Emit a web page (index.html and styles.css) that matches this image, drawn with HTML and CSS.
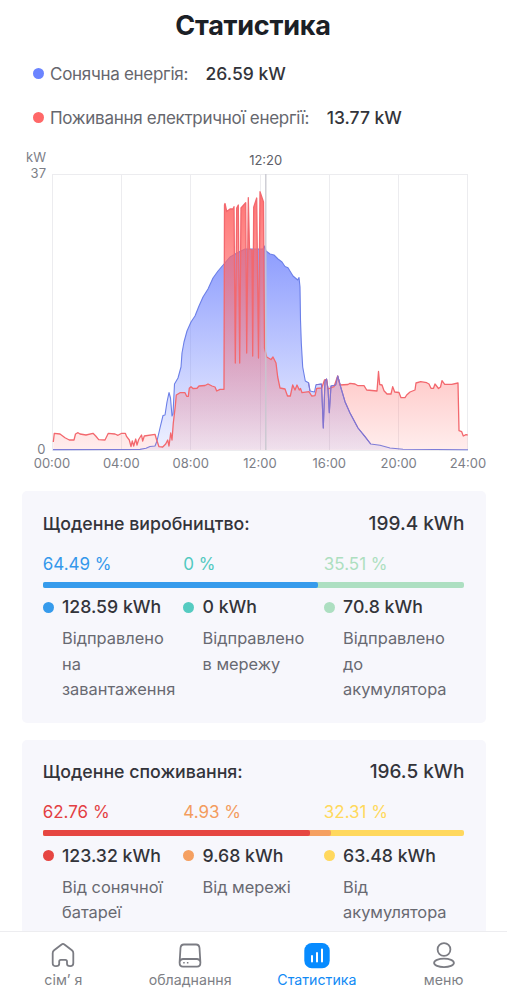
FILE: index.html
```html
<!DOCTYPE html>
<html lang="uk">
<head>
<meta charset="utf-8">
<title>Статистика</title>
<link rel="stylesheet" href="styles.css">
</head>
<body>
<main class="content">
  <h1 class="title">Статистика</h1>
  <div class="legend">
    <div class="legend-row"><i class="dot indigo"></i><span class="legend-name solar">Сонячна енергія:</span><b class="legend-value">26.59 kW</b></div>
    <div class="legend-row"><i class="dot coral"></i><span class="legend-name load">Поживання електричної енергії:</span><b class="legend-value">13.77 kW</b></div>
  </div>
  <svg class="chart" viewBox="0 145 507 330" width="507" height="330">
    <defs>
      <linearGradient id="blue" gradientUnits="userSpaceOnUse" x1="0" y1="246" x2="0" y2="450"><stop offset="0" stop-color="#6f82fd" stop-opacity=".8"/><stop offset="1" stop-color="#7388fe" stop-opacity=".12"/></linearGradient>
      <linearGradient id="red" gradientUnits="userSpaceOnUse" x1="0" y1="192" x2="0" y2="450"><stop offset="0" stop-color="#ff6666" stop-opacity=".92"/><stop offset="1" stop-color="#ff6b68" stop-opacity=".12"/></linearGradient>
    </defs>
    <path class="grid" d="M52 174.5H468M52 450.5H468M52.5 174V450M121.5 174V450M190.5 174V450M260.5 174V450M329.5 174V450M398.5 174V450M467.5 174V450"/>
    <path id="solar" fill="url(#blue)" stroke="#6b7fe8" stroke-width="1.1" stroke-linejoin="round" d="M53 449.6L140 449.4L146 448.3L150 446.5L155 446L157 441L160 428L163 415.5L165 415L167 402L169 392.5L170.5 398L172 416L173 414L174.5 384L178 378L181 367L182 353L184 342L187 331L191 322L195 316L199 306L203 297L208 289L213 278L218 271L224 264L230 257L237 253L245 249L263 249L264.5 246L266 251L270 254L274 255L278 259L282 262L285 266.5L288 267.7L293 276L297.7 280L299 277.5L300 287L300.5 320L301.3 343L302.7 367L305.3 381L308.5 382.7L310 391L314.5 392L316 384.7L321.5 384L323.3 428L325 381L326.5 379L328 389L329.3 412.7L331 386L335.7 385L337.7 376L340.7 387L345 401.7L350 413L358 428L365 436.7L370.7 444L380 445.3L390 448L403 449.3L468 449.7"/>
    <path fill="url(#red)" d="M53.3 450L53.3 442L54.3 433.3L60 434L65 437.7L69.3 440L74 440L75.5 434L78 432.7L80 434L86 435L93 433.3L95.7 436L98.7 439.7L105 440L108.3 433.3L115 434L118 435.3L121.7 433.3L125.3 433.3L126.7 436.7L129.3 440L131 446.5L132.3 441L133.7 446L135.7 439L137 445L138.7 439.5L141.5 435L142.7 441L144.3 436L155 434.3L156.7 440L159 446.7L162.7 447L165.7 444L167.7 440L169 446L170.7 433L172 440L173.3 423L175.3 406L176.3 395L180 392.7L185 392.7L186.7 396.3L188.3 396.3L189.3 388.3L191 386.7L193 388.5L197 388.3L199 386L205 385.5L208 384L212 386L215 387L216.7 391L220 389.3L224 389.3L224.5 205L225 203.5L226.7 211.5L230 209L233 209L234 206.7L235.3 363L236.7 208L238.3 205L239.7 363L241 208L245.7 202.7L246.7 353L248.3 197.7L249.5 249L252 250L252.7 356L253.7 207.3L256.7 198L258.5 358L260 191.7L263.5 202L264.5 348L266.7 357L271 359.5L273 357L276 363L277.7 377L280 388L285 389L287.5 396L290.3 396L292.7 385L295 390L297 385L299.3 390L300.5 388.5L302 392.7L309 391.7L311.7 396L315 395.7L316.7 388.3L321.7 388L324.5 380L326.7 379.5L328 389L334 386.7L337.7 376L340 385L348 384.5L350 383.3L355 384L358 385.7L364 385.7L366.7 390L377 391L378.5 371.5L379.7 384.5L382 385L384 390.7L387 394L391 394L392.7 386.7L394.7 392L399 392.5L401 397.7L405 397.7L406.7 395L410 392L415 390L416 383L420.7 381.7L426.7 382.7L429 384L431 388.3L433.5 388.3L435 384L438.5 388.5L440.5 387L442 380.7L444.7 384.3L451.7 384.3L458 383L459 430.7L461.7 431.7L463.3 436L466 434.7L467.7 435L467.7 450Z"/>
    <path class="red-line" d="M53.3 442L54.3 433.3L60 434L65 437.7L69.3 440L74 440L75.5 434L78 432.7L80 434L86 435L93 433.3L95.7 436L98.7 439.7L105 440L108.3 433.3L115 434L118 435.3L121.7 433.3L125.3 433.3L126.7 436.7L129.3 440L131 446.5L132.3 441L133.7 446L135.7 439L137 445L138.7 439.5L141.5 435L142.7 441L144.3 436L155 434.3L156.7 440L159 446.7L162.7 447L165.7 444L167.7 440L169 446L170.7 433L172 440L173.3 423L175.3 406L176.3 395L180 392.7L185 392.7L186.7 396.3L188.3 396.3L189.3 388.3L191 386.7L193 388.5L197 388.3L199 386L205 385.5L208 384L212 386L215 387L216.7 391L220 389.3L224 389.3L224.5 205L225 203.5L226.7 211.5L230 209L233 209L234 206.7L235.3 363L236.7 208L238.3 205L239.7 363L241 208L245.7 202.7L246.7 353L248.3 197.7L249.5 249L252 250L252.7 356L253.7 207.3L256.7 198L258.5 358L260 191.7L263.5 202L264.5 348L266.7 357L271 359.5L273 357L276 363L277.7 377L280 388L285 389L287.5 396L290.3 396L292.7 385L295 390L297 385L299.3 390L300.5 388.5L302 392.7L309 391.7L311.7 396L315 395.7L316.7 388.3L321.7 388L324.5 380L326.7 379.5L328 389L334 386.7L337.7 376L340 385L348 384.5L350 383.3L355 384L358 385.7L364 385.7L366.7 390L377 391L378.5 371.5L379.7 384.5L382 385L384 390.7L387 394L391 394L392.7 386.7L394.7 392L399 392.5L401 397.7L405 397.7L406.7 395L410 392L415 390L416 383L420.7 381.7L426.7 382.7L429 384L431 388.3L433.5 388.3L435 384L438.5 388.5L440.5 387L442 380.7L444.7 384.3L451.7 384.3L458 383L459 430.7L461.7 431.7L463.3 436L466 434.7L467.7 435"/>
    <path class="blue-line" d="M308.5 382.7L310 391M316 384.7L321.5 384L323.3 428L325 381L326.5 379L328 389L329.3 412.7L331 386L335.7 385L337.7 376L340.7 387L345 401.7L350 413L358 428L365 436.7L370.7 444"/>
    <path class="cursor" d="M265.8 174V450"/>
    <g class="axis">
      <text x="46" y="162" text-anchor="end">kW</text>
      <text x="46" y="178.300" text-anchor="end">37</text>
      <text x="45.500" y="453.500" text-anchor="end">0</text>
      <text class="now" x="265.700" y="165">12:20</text>
      <g text-anchor="middle"><text x="52" y="467.500">00:00</text><text x="121.300" y="467.500">04:00</text><text x="190.700" y="467.500">08:00</text><text x="260" y="467.500">12:00</text><text x="329.300" y="467.500">16:00</text><text x="398.700" y="467.500">20:00</text><text x="468" y="467.500">24:00</text></g>
    </g>
  </svg>

  <section class="card production">
    <header class="card-head"><h2>Щоденне виробництво:</h2><b>199.4 kWh</b></header>
    <div class="cols percents"><span class="t-blue">64.49 %</span><span class="t-teal">0 %</span><span class="t-green">35.51 %</span></div>
    <div class="bar b-green"><i class="b-blue" style="width:65.2%"></i></div>
    <div class="cols">
      <div class="item"><i class="dot b-blue"></i><b>128.59 kWh</b><p>Відправлено<br>на<br>завантаження</p></div>
      <div class="item"><i class="dot b-teal"></i><b>0 kWh</b><p>Відправлено<br>в мережу</p></div>
      <div class="item"><i class="dot b-green"></i><b>70.8 kWh</b><p>Відправлено<br>до<br>акумулятора</p></div>
    </div>
  </section>

  <section class="card consumption">
    <header class="card-head"><h2>Щоденне споживання:</h2><b>196.5 kWh</b></header>
    <div class="cols percents"><span class="t-red">62.76 %</span><span class="t-orange">4.93 %</span><span class="t-yellow">32.31 %</span></div>
    <div class="bar b-yellow"><div class="bar-part b-orange" style="width:68.4%"><i class="b-red" style="width:92.8%"></i></div></div>
    <div class="cols">
      <div class="item"><i class="dot b-red"></i><b>123.32 kWh</b><p>Від сонячної<br>батареї</p></div>
      <div class="item"><i class="dot b-orange"></i><b>9.68 kWh</b><p>Від мережі</p></div>
      <div class="item"><i class="dot b-yellow"></i><b>63.48 kWh</b><p>Від<br>акумулятора</p></div>
    </div>
  </section>
</main>

<nav class="tabs">
  <a class="tab"><svg viewBox="0 0 28 28" width="28" height="28"><path d="M14 2.900Q14.700 2.900 15.400 3.500L22.900 9.300Q24.300 10.400 24.300 12V22.300Q24.300 25.200 21.300 25.200Q18 25.200 18 22.800V20.500Q18 18.900 16.400 18.900H11.800Q10.200 18.900 10.200 20.500V22.800Q10.200 25.200 7 25.200Q3.700 25.200 3.700 22.300V12Q3.700 10.400 5.100 9.300L12.600 3.500Q13.300 2.900 14 2.900Z"/></svg><span class="home">сім’ я</span></a>
  <a class="tab"><svg viewBox="0 0 28 28" width="28" height="28"><path d="M8 3.500H20Q23.200 3.500 23.500 7L24.400 21.500Q24.500 25.600 21 25.600H7Q3.500 25.600 3.600 21.500L4.500 7Q4.800 3.500 8 3.500ZM3.900 20.200Q4.600 18 7 18H21Q23.400 18 24.100 20.200"/><path class="solid" d="M7.200 21H8.700V22.500H7.200ZM10.900 21H12.400V22.500H10.900Z"/></svg><span class="devices">обладнання</span></a>
  <a class="tab active"><svg viewBox="0 0 28 28" width="28" height="28"><rect class="tile" x="1.300" y="2" width="25.400" height="25.200" rx="7.500"/><path d="M9 15V20.500M14 12V20.500M19 8.500V20.500"/></svg><span class="stats">Статистика</span></a>
  <a class="tab"><svg viewBox="0 0 28 28" width="28" height="28"><circle cx="14" cy="8.500" r="6.400"/><ellipse cx="14" cy="21.900" rx="9.900" ry="4.200"/></svg><span class="menu">меню</span></a>
</nav>
</body>
</html>
```
FILE: styles.css
```css
* { box-sizing: border-box; }
body { margin: 0; width: 507px; height: 1000px; overflow: hidden; display: flex; flex-direction: column; background: #fff; color: #33343a; font-family: Inter, "Noto Sans", sans-serif; }
b { font-weight: 500; }
.content { height: 931px; flex: none; overflow: hidden; display: flex; flex-direction: column; }
.title { margin: 0; height: 51px; flex: none; text-align: center; font-size: 27px; line-height: 51px; font-weight: 700; color: #1b2026; letter-spacing: -0.250px; text-indent: -1px; }
.legend { height: 94px; flex: none; padding-left: 33px; }
.legend-row { height: 44px; display: flex; align-items: center; font-size: 17px; color: #66676e; white-space: nowrap; }
.legend-row:first-child { padding-top: 1px; }
.legend-row + .legend-row { padding-top: 1px; }
.legend-name { letter-spacing: -0.290px; }
.legend-value { margin-left: 17.500px; font-size: 17.500px; color: #33343a; }
.dot { width: 11px; height: 11px; border-radius: 50%; flex: none; }
.legend .dot { margin-right: 6px; }
.indigo { background: #6b84ff; }
.coral { background: #ff6868; }
.chart { display: block; flex: none; }
.grid { fill: none; stroke: #ececef; stroke-width: 1; }
.red-line { fill: none; stroke: #f3686e; stroke-width: 1.3; stroke-linejoin: round; }
.blue-line { fill: none; stroke: #8274d0; stroke-width: 1.1; stroke-linejoin: round; }
.cursor { stroke: #c7c7cf; stroke-width: 1.3; }
.axis { font-size: 13px; fill: #7c7e87; }
.axis .now { text-anchor: middle; fill: #5e6068; }
.card { margin: 16px 21.500px 0; padding: 18px 21.200px 0; height: 232px; flex: none; border-radius: 5px; background: #f7f7fc; }
.card.consumption { margin-top: 17px; padding-top: 17.500px; }
.card-head { display: flex; justify-content: space-between; align-items: center; height: 28px; font-size: 19px; }
.card-head h2 { margin: 0; font-size: 17.750px; font-weight: 500; }
.cols { display: grid; grid-template-columns: repeat(3, 1fr); }
.percents { margin-top: 14.500px; height: 24px; line-height: 24px; font-size: 17px; }
.bar { margin-top: 6.300px; height: 6px; border-radius: 2px; overflow: hidden; }
.bar i, .bar-part { display: block; height: 6px; border-radius: 0 2px 2px 0; }
.bar + .cols { margin-top: 6.700px; }
.item { display: grid; grid-template-columns: 11px auto; column-gap: 8.300px; align-items: center; justify-content: start; align-content: start; }
.item b { font-size: 17.700px; line-height: 26px; white-space: nowrap; }
.item p { grid-column: 2; margin: 5.800px 0 0; font-size: 16.400px; line-height: 25.400px; color: #686971; white-space: nowrap; }
.t-blue { color: #3498eb; } .b-blue { background: #369bec; }
.t-teal { color: #52c9c0; } .b-teal { background: #55cbc1; }
.t-green { color: #addfc0; } .b-green { background: #addfc1; }
.t-red { color: #e33f43; } .b-red { background: #e64642; }
.t-orange { color: #f39c5e; } .b-orange { background: #f5a061; }
.t-yellow { color: #ffd95d; } .b-yellow { background: #ffd85e; }
.tabs { height: 69px; flex: none; display: grid; grid-template-columns: repeat(4, 1fr); border-top: 1px solid #ededf0; background: #fff; }
.tab { display: flex; flex-direction: column; align-items: center; padding-top: 9px; font-size: 14.200px; line-height: 21px; color: #7e7f86; white-space: nowrap; }
.tab svg { fill: none; stroke: #7b7c83; stroke-width: 1.8; stroke-linecap: round; stroke-linejoin: round; }
.tab .solid { fill: #7b7c83; stroke: none; }
.tab.active { color: #118af5; }
.tab.active svg { stroke: #fff; stroke-width: 2; }
.tab .tile { fill: #078bff; stroke: none; }
```
